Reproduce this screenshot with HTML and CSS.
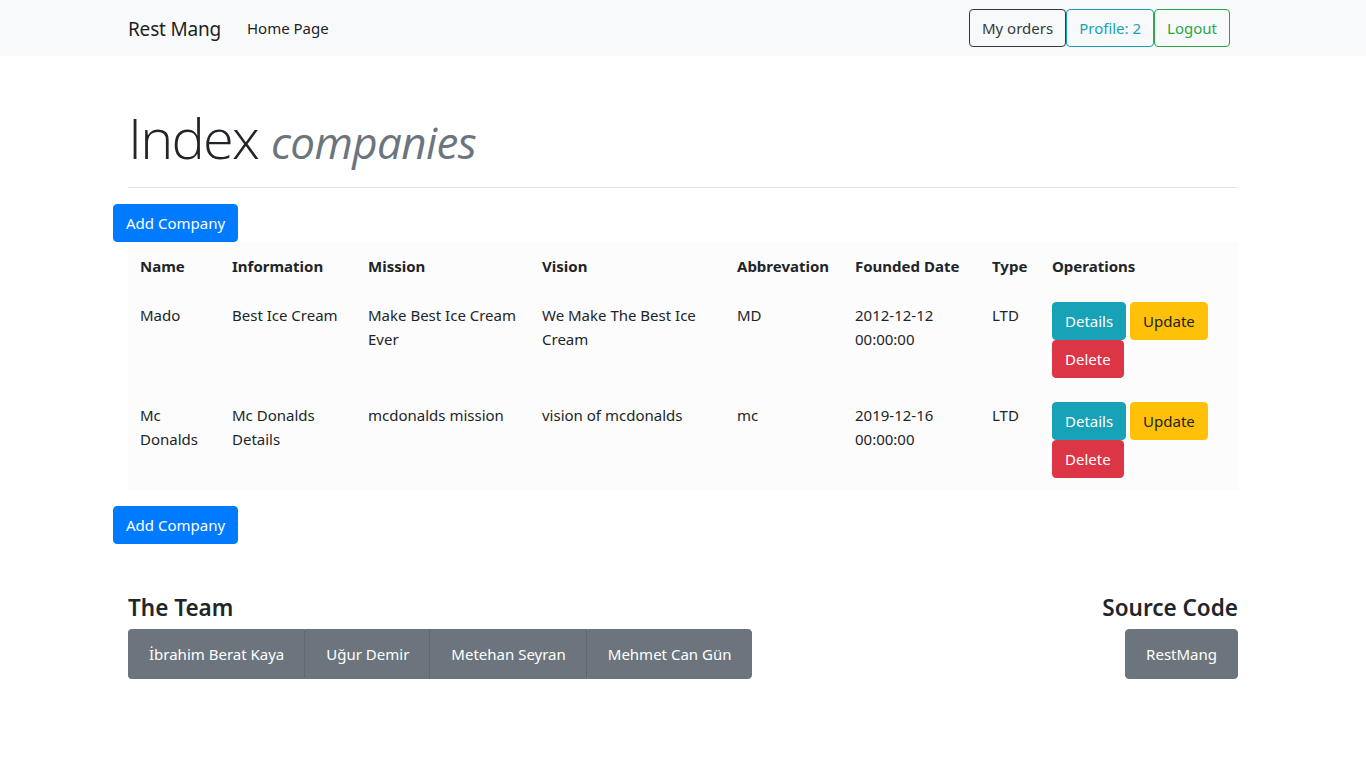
FILE: index.html
```html
<!DOCTYPE html>
<html lang="en">
<head>
<meta charset="utf-8">
<title>Index companies</title>
<link rel="stylesheet" href="styles.css">
</head>
<body>
<nav class="navbar">
  <div class="container nav-inner">
    <a class="brand" href="#">Rest Mang</a>
    <a class="nav-link" href="#">Home Page</a>
    <div class="nav-right">
      <a class="btn btn-outline-dark" href="#">My orders</a>
      <a class="btn btn-outline-info" href="#">Profile: 2</a>
      <a class="btn btn-outline-success" href="#">Logout</a>
    </div>
  </div>
</nav>
<main class="container">
  <div class="page-header">
    <h1 class="display">Index <small>companies</small></h1>
  </div>
  <div class="row"><a class="btn btn-primary" href="#">Add Company</a></div>
  <table class="table">
    <colgroup>
      <col class="c-name"><col class="c-info"><col class="c-mission"><col class="c-vision">
      <col class="c-abbr"><col class="c-date"><col class="c-type"><col class="c-ops">
    </colgroup>
    <thead>
      <tr><th>Name</th><th>Information</th><th>Mission</th><th>Vision</th><th>Abbrevation</th><th>Founded Date</th><th>Type</th><th>Operations</th></tr>
    </thead>
    <tbody>
      <tr>
        <td>Mado</td><td>Best Ice Cream</td><td>Make Best Ice Cream Ever</td><td>We Make The Best Ice Cream</td><td>MD</td><td>2012-12-12 00:00:00</td><td>LTD</td>
        <td class="ops"><a class="btn btn-info" href="#">Details</a> <a class="btn btn-warning" href="#">Update</a> <a class="btn btn-danger" href="#">Delete</a></td>
      </tr>
      <tr>
        <td>Mc Donalds</td><td>Mc Donalds Details</td><td>mcdonalds mission</td><td>vision of mcdonalds</td><td>mc</td><td>2019-12-16 00:00:00</td><td>LTD</td>
        <td class="ops"><a class="btn btn-info" href="#">Details</a> <a class="btn btn-warning" href="#">Update</a> <a class="btn btn-danger" href="#">Delete</a></td>
      </tr>
    </tbody>
  </table>
  <div class="row"><a class="btn btn-primary" href="#">Add Company</a></div>
  <footer class="footer">
    <div class="team">
      <h4>The Team</h4>
      <div class="btn-group">
        <a class="btn btn-secondary btn-lg" href="#">İbrahim Berat Kaya</a><a class="btn btn-secondary btn-lg" href="#">Uğur Demir</a><a class="btn btn-secondary btn-lg" href="#">Metehan Seyran</a><a class="btn btn-secondary btn-lg" href="#">Mehmet Can Gün</a>
      </div>
    </div>
    <div class="source">
      <h4>Source Code</h4>
      <div class="btn-group">
        <a class="btn btn-secondary btn-lg" href="#">RestMang</a>
      </div>
    </div>
  </footer>
</main>
</body>
</html>
```
FILE: styles.css
```css
* { box-sizing: border-box; }
body {
  margin: 0;
  font-family: "Noto Sans", "Open Sans", "Liberation Sans", sans-serif;
  font-size: 16px;
  line-height: 1.5;
  color: #212529;
  background: #fff;
}
a { text-decoration: none; }
.container { width: 1140px; margin: 0 auto; padding: 0 15px; }
.navbar { background: #f8f9fa; height: 56px; }
.nav-inner { display: flex; align-items: center; height: 56px; }
.brand { font-size: 19px; color: rgba(0,0,0,.9); margin-right: 26px; line-height: 30px; letter-spacing: -0.2px; padding-top: 2px; }
.nav-link { color: rgba(0,0,0,.9); font-size: 15px; line-height: 24px; }
.nav-right { margin-left: auto; margin-right: 8px; display: flex; }
.btn {
  display: inline-block;
  padding: 6px 12px;
  font-size: 15px;
  line-height: 24px;
  border: 1px solid transparent;
  border-radius: 4px;
  text-align: center;
  white-space: nowrap;
  vertical-align: middle;
}
.btn-outline-dark { color: #343a40; border-color: #343a40; }
.btn-outline-info { color: #17a2b8; border-color: #17a2b8; }
.btn-outline-success { color: #28a745; border-color: #28a745; }
.btn-primary { background: #007bff; border-color: #007bff; color: #fff; }
.btn-info { background: #17a2b8; border-color: #17a2b8; color: #fff; }
.btn-warning { background: #ffc107; border-color: #ffc107; color: #212529; }
.btn-danger { background: #dc3545; border-color: #dc3545; color: #fff; }
.btn-secondary { background: #6c757d; border-color: #6c757d; color: #fff; }

.page-header { margin-top: 48px; padding-bottom: 16px; border-bottom: 1px solid #e5e5e5; margin-bottom: 16px; }
.display { margin: 0; font-family: "Open Sans", "Noto Sans", sans-serif; font-weight: 300; font-size: 56px; line-height: 1.2; color: #212529; letter-spacing: -1.8px; }
.display small { font-style: italic; font-size: 44px; color: #6c757d; font-weight: 400; letter-spacing: -0.6px; }
.row { margin: 0 -15px; }

.table { width: 100%; border-collapse: collapse; table-layout: fixed; background: #fcfcfc; margin-bottom: 16px; }
.c-name { width: 92px; } .c-info { width: 136px; } .c-mission { width: 174px; } .c-vision { width: 195px; }
.c-abbr { width: 118px; } .c-date { width: 137px; } .c-type { width: 60px; } .c-ops { width: 198px; }
.table th, .table td { padding: 12px; text-align: left; vertical-align: top; font-size: 15px; line-height: 24px; }
.table th { font-weight: 700; padding-top: 12px; padding-bottom: 12px; }
.table td { padding-top: 13px; padding-bottom: 11px; }
.table td.ops { padding-top: 12px; padding-bottom: 12px; }

.footer { margin-top: 50px; display: flex; justify-content: space-between; align-items: flex-start; }
.footer h4 { margin: 0 0 7px; font-size: 22.5px; font-weight: 600; line-height: 28px; }
.source { text-align: right; }
.btn-group { display: inline-flex; }
.btn-lg { padding: 12px 20px; font-size: 15px; line-height: 24px; border-radius: 0; border-right-color: #5f676f; }
.btn-group .btn-lg:first-child { border-top-left-radius: 4px; border-bottom-left-radius: 4px; }
.btn-group .btn-lg:last-child { border-top-right-radius: 4px; border-bottom-right-radius: 4px; border-right-color: #6c757d; }
```
